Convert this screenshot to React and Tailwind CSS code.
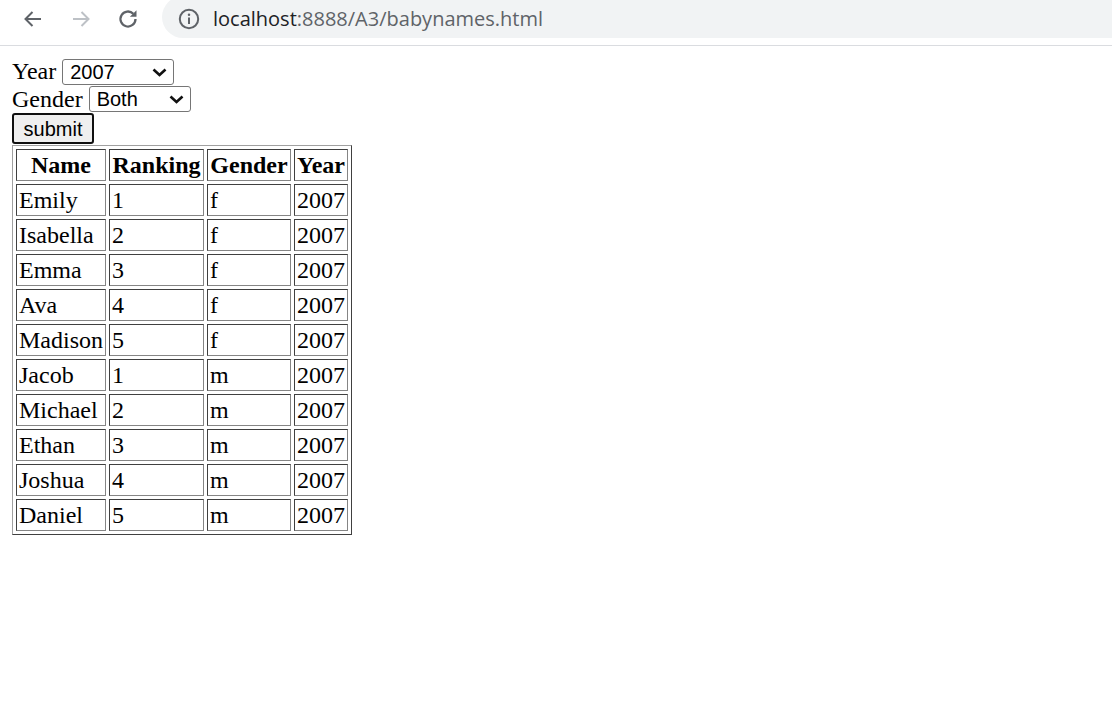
import React from "react";

const rows = [
  ["Emily", "1", "f"],
  ["Isabella", "2", "f"],
  ["Emma", "3", "f"],
  ["Ava", "4", "f"],
  ["Madison", "5", "f"],
  ["Jacob", "1", "m"],
  ["Michael", "2", "m"],
  ["Ethan", "3", "m"],
  ["Joshua", "4", "m"],
  ["Daniel", "5", "m"],
];

function Chevron() {
  return (
    <svg width="15" height="9" viewBox="0 0 15 9" className="shrink-0">
      <path d="M1.5 1.5 L7.5 7 L13.5 1.5" fill="none" stroke="#111" strokeWidth="2.6" />
    </svg>
  );
}

function FakeSelect({ value, width }) {
  return (
    <div
      className={`flex h-[26px] items-center justify-between rounded-[3px] border border-[#767676] bg-white pl-[7px] pr-[6px] text-[20px] leading-[24px] text-black ${width}`}
      style={{ fontFamily: '"Liberation Sans", Arial, sans-serif' }}
    >
      <span>{value}</span>
      <Chevron />
    </div>
  );
}

const cellBase =
  "h-[32px] border border-t-[#404040] border-l-[#404040] border-r-[#858585] border-b-[#858585] px-[2px] py-[1px] text-[24px] leading-[28px] align-middle";

export default function App() {
  return (
    <div className="min-h-[720px] w-[1112px] bg-white text-black">
      {/* browser chrome */}
      <div className="flex h-[46px] items-start overflow-hidden border-b border-[#dadce0] bg-white">
        <div className="flex h-[38px] items-center">
          <svg width="24" height="24" viewBox="0 0 24 24" className="ml-[21px]">
            <path d="M20 12H4.5M11.5 5 4.5 12l7 7" fill="none" stroke="#5f6368" strokeWidth="2" />
          </svg>
          <svg width="24" height="24" viewBox="0 0 24 24" className="ml-[24px]">
            <path d="M4 12h15.5M12.5 5l7 7-7 7" fill="none" stroke="#bdc1c6" strokeWidth="2" />
          </svg>
          <svg width="24" height="24" viewBox="0 0 24 24" className="ml-[23px]">
            <path
              d="M19.5 12a7.5 7.5 0 1 1-2.2-5.3"
              fill="none"
              stroke="#5f6368"
              strokeWidth="2.3"
            />
            <path d="M20.5 3.2v6.6h-6.6z" fill="#5f6368" />
          </svg>
        </div>
        <div className="ml-[22px] -mt-[4px] flex h-[42px] flex-1 items-center rounded-l-[21px] bg-[#f1f3f4] pt-[4px]">
          <svg width="22" height="22" viewBox="0 0 22 22" className="ml-[16px]">
            <circle cx="11" cy="11" r="9.2" fill="none" stroke="#5f6368" strokeWidth="2" />
            <rect x="10" y="9.5" width="2" height="6.5" fill="#5f6368" />
            <circle cx="11" cy="6.8" r="1.25" fill="#5f6368" />
          </svg>
          <div
            className="ml-[13px] text-[20px] leading-[24px]"
            style={{ fontFamily: '"Open Sans", "Noto Sans", sans-serif' }}
          >
            <span className="text-[#202124]">localhost</span>
            <span className="text-[#5f6368]">:8888/A3/babynames.html</span>
          </div>
        </div>
      </div>

      {/* page */}
      <div
        className="px-[12px] pt-[12px]"
        style={{ fontFamily: '"Liberation Serif", "Times New Roman", serif' }}
      >
        <div className="flex h-[28px] items-center text-[24px] leading-[28px]">
          <span className="-mt-[2px]">Year</span>
          <span className="w-[6px]" />
          <FakeSelect value="2007" width="w-[112px]" />
        </div>
        <div className="flex h-[27px] items-start text-[24px] leading-[28px]">
          <span className="-mt-[1px]">Gender</span>
          <span className="w-[6px]" />
          <FakeSelect value="Both" width="w-[102px]" />
        </div>
        <div className="flex h-[32px] items-start">
          <div
            className="flex h-[31px] w-[82px] items-center justify-center rounded-[3px] border-2 border-[#101010] bg-[#efefef] text-[20px] leading-[24px]"
            style={{ fontFamily: '"Liberation Sans", Arial, sans-serif' }}
          >
            submit
          </div>
        </div>
        <table className="border-separate border-spacing-[3px] border border-t-[#a0a0a0] border-l-[#a0a0a0] border-r-[#404040] border-b-[#404040]">
          <thead>
            <tr>
              <th className={`${cellBase} w-[90px] text-center font-bold`}>Name</th>
              <th className={`${cellBase} w-[95px] text-center font-bold`}>Ranking</th>
              <th className={`${cellBase} w-[84px] text-center font-bold`}>Gender</th>
              <th className={`${cellBase} w-[54px] text-center font-bold`}>Year</th>
            </tr>
          </thead>
          <tbody>
            {rows.map((r) => (
              <tr key={r[0]}>
                <td className={`${cellBase} text-left`}>{r[0]}</td>
                <td className={`${cellBase} text-left`}>{r[1]}</td>
                <td className={`${cellBase} text-left`}>{r[2]}</td>
                <td className={`${cellBase} text-left`}>2007</td>
              </tr>
            ))}
          </tbody>
        </table>
      </div>
    </div>
  );
}
